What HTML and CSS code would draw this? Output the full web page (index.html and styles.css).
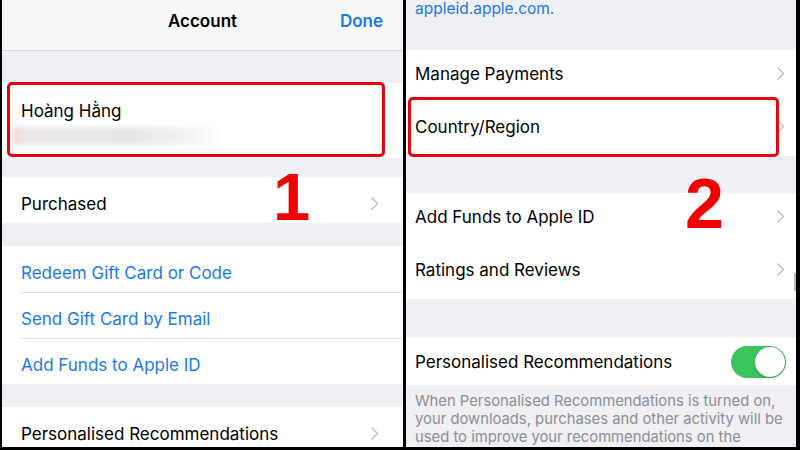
FILE: index.html
```html
<!DOCTYPE html>
<html lang="en">
	<head>
		<meta charset="UTF-8">
		<title>Account settings</title>
		<link rel="stylesheet" href="styles.css">
	</head>
	<body>
		<div class="screen">
			<section class="panel panel-left">
				<header class="navbar">
					<span class="nav-side"></span>
					<span class="nav-title">Account</span>
					<span class="nav-side nav-done">Done</span>
				</header>
				<div class="gap gap-32"></div>
				<div class="group">
					<div class="cell account-cell">
						<div class="name">Hoàng Hằng</div>
						<div class="email-blur"></div>
					</div>
				</div>
				<div class="gap gap-19"></div>
				<div class="group">
					<div class="cell row-left">
						<span>Purchased</span>
						<svg class="chev" width="9" height="15" viewBox="0 0 9 15"><path d="M1.5 1.5l6 6-6 6" fill="none" stroke="#c4c4c9" stroke-width="1.6"/></svg>
					</div>
				</div>
				<div class="gap gap-23"></div>
				<div class="group">
					<div class="cell row-left link">Redeem Gift Card or Code</div>
					<div class="cell row-left link">Send Gift Card by Email</div>
					<div class="cell row-left link">Add Funds to Apple ID</div>
				</div>
				<div class="gap gap-23"></div>
				<div class="group">
					<div class="cell row-left">
						<span>Personalised Recommendations</span>
						<svg class="chev" width="9" height="15" viewBox="0 0 9 15"><path d="M1.5 1.5l6 6-6 6" fill="none" stroke="#c4c4c9" stroke-width="1.6"/></svg>
					</div>
				</div>
				<div class="mark mark-account"></div>
				<div class="step step-1">1</div>
			</section>

			<section class="panel panel-right">
				<div class="top-note">appleid.apple.com.</div>
				<div class="group">
					<div class="cell row-right">
						<span>Manage Payments</span>
						<svg class="chev" width="9" height="15" viewBox="0 0 9 15"><path d="M1.5 1.5l6 6-6 6" fill="none" stroke="#c4c4c9" stroke-width="1.6"/></svg>
					</div>
					<div class="cell row-right no-line">
						<span>Country/Region</span>
						<svg class="chev" width="9" height="15" viewBox="0 0 9 15"><path d="M1.5 1.5l6 6-6 6" fill="none" stroke="#c4c4c9" stroke-width="1.6"/></svg>
					</div>
				</div>
				<div class="gap gap-37"></div>
				<div class="group">
					<div class="cell row-right">
						<span>Add Funds to Apple ID</span>
						<svg class="chev" width="9" height="15" viewBox="0 0 9 15"><path d="M1.5 1.5l6 6-6 6" fill="none" stroke="#c4c4c9" stroke-width="1.6"/></svg>
					</div>
					<div class="cell row-right no-line">
						<span>Ratings and Reviews</span>
						<svg class="chev" width="9" height="15" viewBox="0 0 9 15"><path d="M1.5 1.5l6 6-6 6" fill="none" stroke="#c4c4c9" stroke-width="1.6"/></svg>
					</div>
				</div>
				<div class="gap gap-38"></div>
				<div class="group">
					<div class="cell row-toggle">
						<span>Personalised Recommendations</span>
						<span class="toggle"><span class="knob"></span></span>
					</div>
				</div>
				<p class="footnote">When Personalised Recommendations is turned on, your downloads, purchases and other activity will be used to improve your recommendations on the</p>
				<div class="mark mark-country"></div>
				<div class="step step-2">2</div>
				<div class="scroll-ind"></div>
			</section>
		</div>
	</body>
</html>
```

FILE: styles.css
```css
html {
	font-family: "Inter", "Liberation Sans", sans-serif;
}

body {
	margin: 0;
	background-color: #000;
}

.screen {
	display: flex;
	gap: 3px;
	height: 447px;
	padding-left: 2px;
}

.panel {
	position: relative;
	overflow: hidden;
	background-color: #efeff4;
	color: #000;
	font-size: 17px;
}
.panel-left {
	width: 401px;
}
.panel-right {
	width: 390px;
}

/* nav bar */
.navbar {
	display: flex;
	justify-content: space-between;
	align-items: center;
	height: 42px;
	padding: 0 20px 8px 20px;
	background-color: #f7f7f8;
	border-bottom: 1px solid #d9d9dd;
	font-weight: 600;
}
.nav-side {
	width: 50px;
	text-align: right;
}
.nav-title {
	font-size: 17px;
}
.nav-done {
	color: #1a7ae6;
}

.gap-19 { height: 19px; }
.gap-23 { height: 23px; }
.gap-32 { height: 32px; }
.gap-37 { height: 37px; }
.gap-38 { height: 38px; }

.group {
	background-color: #fff;
}

.cell {
	display: flex;
	justify-content: space-between;
	align-items: center;
	box-sizing: border-box;
}
.cell + .cell {
	border-top: 1px solid #e1e1e5;
}
.cell.no-line {
	border-top: none;
}

.row-left {
	height: 46px;
	margin-left: 19px;
	padding: 7px 24px 0 0;
}
.link {
	color: #1a7ae6;
}

.row-right {
	height: 53px;
	margin-left: 9px;
	padding: 0 11px 6px 0;
}

.row-toggle {
	height: 48px;
	margin-left: 9px;
	padding: 2px 10px 0 0;
}

.chev {
	flex: none;
}

/* account */
.account-cell {
	flex-direction: column;
	align-items: flex-start;
	justify-content: flex-start;
	height: 75px;
	padding: 17px 0 0 19px;
}
.name {
	line-height: 22px;
}
.email-blur {
	width: 209px;
	height: 18px;
	margin: 5px 0 0 -8px;
	background: linear-gradient(90deg, #f5d2d2 0%, #ece8e9 6%, #e7e7ea 55%, #f4f4f6 85%, #fff 100%);
	filter: blur(2px);
}

/* right panel */
.top-note {
	height: 52px;
	padding-left: 9px;
	margin-top: -2px;
	color: #1a7ae6;
	font-size: 15.5px;
	line-height: 22px;
}

.toggle {
	display: flex;
	justify-content: flex-end;
	box-sizing: border-box;
	width: 55px;
	height: 32px;
	padding: 1px;
	border-radius: 16px;
	background-color: #3bc55c;
}
.knob {
	width: 30px;
	height: 30px;
	border-radius: 50%;
	background-color: #fff;
	box-shadow: 0 1px 3px rgba(0, 0, 0, 0.25);
}

.footnote {
	margin: 0;
	padding: 7px 12px 0 9px;
	color: #8e8e93;
	font-size: 14.8px;
	line-height: 18px;
}

.scroll-ind {
	position: absolute;
	right: 0;
	top: 273px;
	width: 2px;
	height: 18px;
	background-color: #b8b8bc;
}

/* annotations drawn over the screenshot */
.mark {
	position: absolute;
	box-sizing: border-box;
	border: 3px solid #e8000d;
	border-radius: 5px;
}
.mark-account {
	left: 5px;
	top: 82px;
	width: 378px;
	height: 75px;
}
.mark-country {
	left: 2px;
	top: 97px;
	width: 371px;
	height: 60px;
}

.step {
	position: absolute;
	color: #f00000;
	font-family: "Liberation Sans", sans-serif;
	font-weight: bold;
	line-height: 1;
}
.step-1 {
	left: 271px;
	top: 163px;
	font-size: 67px;
}
.step-2 {
	left: 279px;
	top: 169px;
	font-size: 70px;
}
```
